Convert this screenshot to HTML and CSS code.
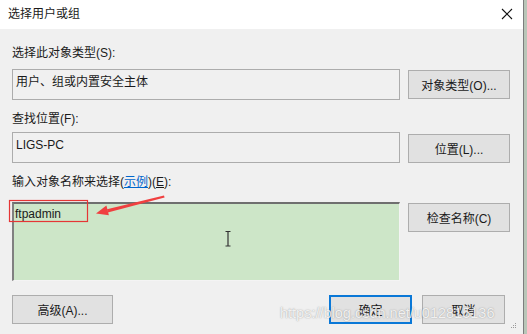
FILE: index.html
```html
<!DOCTYPE html>
<html lang="zh-CN">
<head>
  <meta charset="UTF-8">
  <title>选择用户或组</title>
  <link rel="stylesheet" href="styles.css">
</head>
<body>

<div class="screen">
  <div class="dialog">
    <div class="titlebar">
      <span class="title">选择用户或组</span>
      <svg class="close" width="12" height="12" viewBox="0 0 12 12">
        <path d="M1 1 L11 11 M11 1 L1 11" stroke="#111" stroke-width="1.1" fill="none"/>
      </svg>
    </div>

    <div class="content">
      <div class="label first">选择此对象类型(S):</div>
      <div class="row">
        <div class="field">用户、组或内置安全主体</div>
        <button class="btn">对象类型(O)...</button>
      </div>

      <div class="label">查找位置(F):</div>
      <div class="row">
        <div class="field">LIGS-PC</div>
        <button class="btn low">位置(L)...</button>
      </div>

      <div class="label third">输入对象名称来选择(<a class="link" href="#">示例</a>)(<u>E</u>):</div>
      <div class="row">
        <div class="names">ftpadmin</div>
        <button class="btn">检查名称(C)</button>
      </div>

      <div class="actions">
        <button class="btn wide">高级(A)...</button>
        <div class="spacer"></div>
        <button class="btn small default">确定</button>
        <button class="btn small">取消</button>
      </div>
    </div>
  </div>
  <div class="edge"></div>

  <!-- annotations drawn over the screenshot -->
  <svg class="marks" width="527" height="334" viewBox="0 0 527 334">
    <rect x="9.5" y="200.5" width="78" height="21" fill="none" stroke="#e53535" stroke-width="1.2"/>
    <polygon points="164,195.5 164.6,197.5 107.8,212.4 107,209.2" fill="#f04040"/>
    <polygon points="96,213.5 106.4,205.6 108.9,215.2" fill="#f04040"/>
    <path d="M225.5 231.5 H230.5 M228 231.5 V246 M225.5 246 H230.5" stroke="#333" stroke-width="1.2" fill="none"/>
    <g fill="#9a9a9a">
      <rect x="515" y="323" width="1" height="1"/>
      <rect x="513" y="325" width="1" height="1"/>
      <rect x="515" y="325" width="1" height="1"/>
      <rect x="511" y="327" width="1" height="1"/>
      <rect x="513" y="327" width="1" height="1"/>
      <rect x="515" y="327" width="1" height="1"/>
    </g>
  </svg>
  <div class="watermark">https://blog.csdn.net/u012815136</div>
</div>

</body>
</html>
```

FILE: styles.css
```css
body {
  margin: 0;
  background: #f0f0f0;
  font-family: "Liberation Sans", "Noto Sans CJK SC", sans-serif;
  font-size: 12px;
  color: #1a1a1a;
}

.screen {
  position: relative;
  width: 527px;
  height: 334px;
  display: flex;
  overflow: hidden;
}

.dialog {
  width: 523px;
  background: #f0f0f0;
}

.edge {
  width: 3px;
  border-left: 1px solid #7d7d7d;
  background: #b9c6b8;
}

.titlebar {
  height: 29px;
  background: #fff;
  display: flex;
  align-items: center;
  justify-content: space-between;
  padding: 0 10px 0 8px;
}

.title {
  line-height: 16px;
  margin-top: -1px;
}

.close {
  margin-top: -1px;
}

.content {
  padding: 0 0 0 12px;
}

.label {
  height: 16px;
  line-height: 16px;
  margin: 11px 0 5px;
}

.label.first {
  margin: 16px 0 8px;
}

.label.third {
  margin: 11px 0 12px;
}

.link {
  color: #0066cc;
  text-decoration: underline;
}

.row {
  display: grid;
  grid-template-columns: 388px 102px;
  column-gap: 8px;
  align-items: start;
}

.field {
  box-sizing: border-box;
  height: 31px;
  border: 1px solid #acacac;
  padding: 4px 3px;
  line-height: 16px;
  background: #f0f0f0;
}

.names {
  box-sizing: border-box;
  height: 79px;
  background: #cde6c8;
  border-top: 2px solid #6f6f6f;
  border-left: 2px solid #808080;
  border-right: 1px solid #f4f4f4;
  border-bottom: 1px solid #f4f4f4;
  padding: 2px 1px;
  line-height: 16px;
}

.btn {
  box-sizing: border-box;
  height: 29px;
  margin-top: 1px;
  background: #e1e1e1;
  border: 1px solid #adadad;
  border-radius: 0;
  font-family: inherit;
  font-size: 12px;
  color: #1a1a1a;
  padding: 0;
}

.btn.low {
  margin-top: 2px;
}

.actions {
  display: flex;
  gap: 10px;
  margin-top: 14px;
  padding-right: 18px;
}

.actions .btn {
  margin-top: 0;
}

.btn.wide {
  width: 101px;
}

.btn.small {
  width: 83px;
}

.btn.default {
  border: 2px solid #0a78d7;
}

.spacer {
  flex: 1;
}

.marks {
  position: absolute;
  left: 0;
  top: 0;
  pointer-events: none;
}

.watermark {
  position: absolute;
  left: 280px;
  top: 304px;
  font-size: 14.5px;
  line-height: 18px;
  color: rgba(255, 255, 255, 0.85);
  text-shadow: 0 0 1px rgba(100, 100, 100, 0.5), 0 0 2px rgba(140, 140, 140, 0.3);
  white-space: nowrap;
  pointer-events: none;
}
```
